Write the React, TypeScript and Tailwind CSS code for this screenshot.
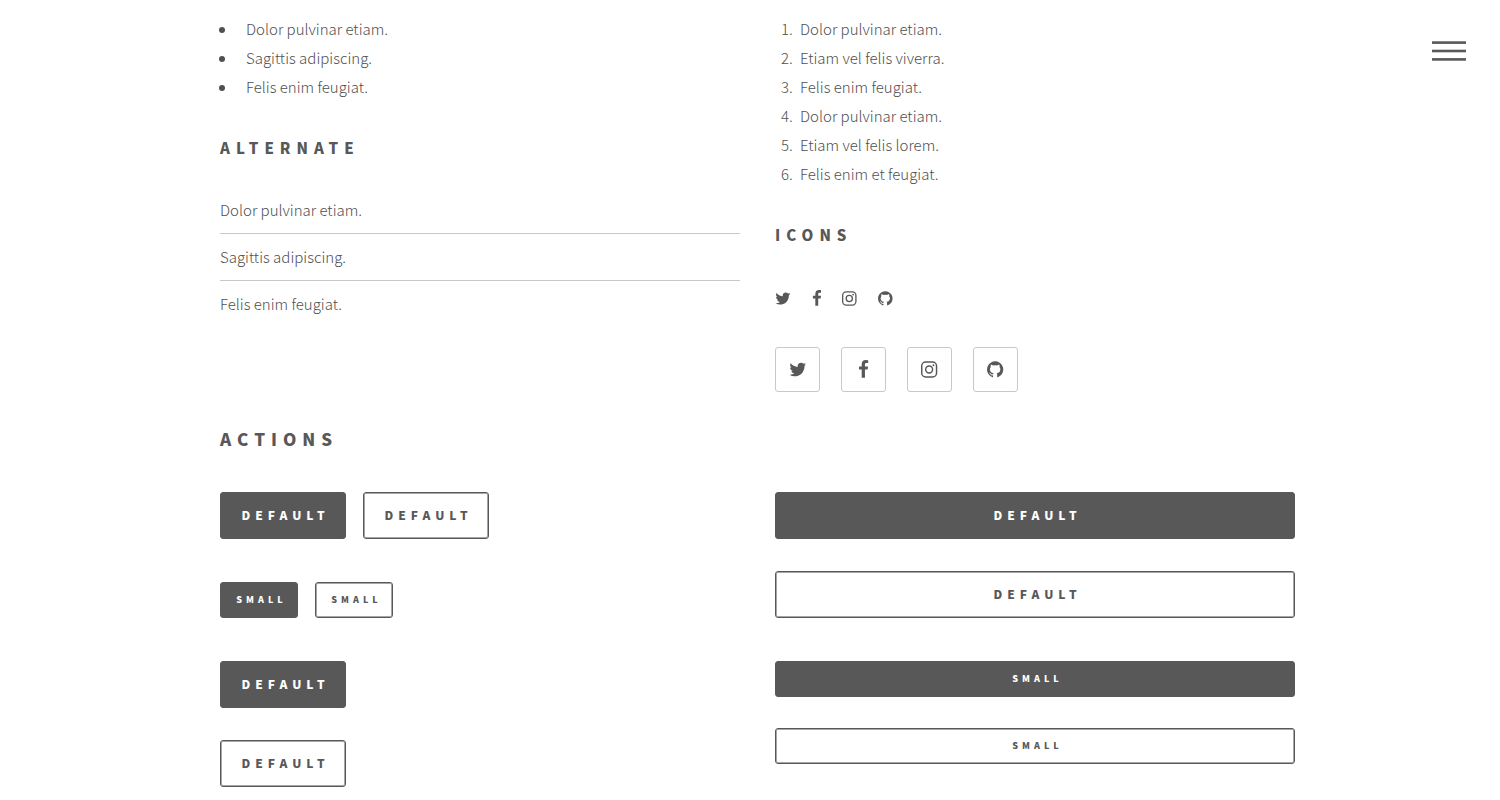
import type { ReactNode } from "react";

const bulleted = ["Dolor pulvinar etiam.", "Sagittis adipiscing.", "Felis enim feugiat."];
const numbered = [
  "Dolor pulvinar etiam.",
  "Etiam vel felis viverra.",
  "Felis enim feugiat.",
  "Dolor pulvinar etiam.",
  "Etiam vel felis lorem.",
  "Felis enim et feugiat.",
];

type Social = { name: string; viewBox: string; shape: ReactNode };

const socials: Social[] = [
  {
    name: "Twitter",
    viewBox: "64 0 1664 1792",
    shape: (
      <path d="M1684 408q-67 98-162 167 1 14 1 42 0 130-38 259.5t-115.5 248.5-184.5 210.5-258 146-323 54.5q-271 0-496-145 35 4 78 4 225 0 401-138-105-2-188-64.5t-114-159.5q33 5 61 5 43 0 85-11-112-23-185.5-111.5t-73.5-205.5v-4q68 38 146 41-66-44-105-115t-39-154q0-88 44-163 121 149 294.5 238.5t371.5 99.5q-8-38-8-74 0-134 94.5-228.5t228.5-94.5q140 0 236 102 109-21 205-78-37 115-142 178 93-10 186-50z" />
    ),
  },
  {
    name: "Facebook",
    viewBox: "384 0 1024 1792",
    shape: (
      <path d="M1343 12v264h-157q-86 0-116 36t-30 108v189h293l-39 296h-254v759h-306v-759h-255v-296h255v-218q0-186 104-288.5t277-102.5q147 0 228 12z" />
    ),
  },
  {
    name: "Instagram",
    viewBox: "128 0 1536 1792",
    shape: (
      <>
        <rect x="197" y="197" width="1398" height="1398" rx="370" fill="none" stroke="currentColor" strokeWidth="138" />
        <circle cx="896" cy="896" r="325" fill="none" stroke="currentColor" strokeWidth="138" />
        <circle cx="1306" cy="486" r="92" />
      </>
    ),
  },
  {
    name: "GitHub",
    viewBox: "128 0 1536 1792",
    shape: (
      <path d="M896 128q209 0 385.5 103t279.5 279.5 103 385.5q0 251-146.5 451.5t-378.5 277.5q-27 5-40-7t-13-30q0-3 .5-76.5t.5-134.5q0-97-52-142 57-6 102.5-18t94-39 81-66.5 53-105 20.5-150.5q0-119-79-206 37-91-8-204-28-9-81 11t-92 44l-38 24q-93-26-192-26t-192 26q-16-11-42.5-27t-83.5-38.5-85-13.5q-45 113-8 204-79 87-79 206 0 85 20.5 150t52.5 105 80.5 67 94 39 102.5 18q-39 36-49 103-21 10-45 15t-57 5-65.5-21.5-55.5-62.5q-19-32-48.5-52t-49.5-24l-20-3q-21 0-29 4.5t-5 11.5 9 14 13 12l7 5q22 10 43.5 38t31.5 51l10 23q13 38 44 61.5t67 30 69.5 7 55.5-3.5l23-4q0 38 .5 88.5t.5 54.5q0 18-13 30t-40 7q-232-77-378.5-277.5t-146.5-451.5q0-209 103-385.5t279.5-279.5 385.5-103z" />
    ),
  },
];

function Glyph({ social, className }: { social: Social; className: string }) {
  return (
    <svg viewBox={social.viewBox} fill="currentColor" aria-hidden="true" className={`w-auto ${className}`}>
      {social.shape}
    </svg>
  );
}

type ActionProps = { label: string; primary?: boolean; small?: boolean; fit?: boolean };

function Action({ label, primary, small, fit }: ActionProps) {
  const size = small
    ? "h-9 text-[9px] tracking-[4px]"
    : "h-[47px] text-[12px] tracking-[5px]";
  const tone = primary
    ? "bg-[#585858] text-white"
    : "bg-white text-[#585858] shadow-[inset_0_0_0_1px_#a6a6a6]";
  const width = fit ? "w-full" : small ? "w-[78px]" : "w-[126px]";
  return (
    <button
      type="button"
      className={`flex cursor-pointer items-center justify-center rounded-[3px] border border-[#585858] pb-[2px] pl-[5px] font-black uppercase ${size} ${tone} ${width}`}
    >
      {label}
    </button>
  );
}

export default function App() {
  return (
    <div className="bg-white pb-3 font-['Noto_Sans_CJK_SC','Source_Sans_Pro',sans-serif] text-[15px] leading-[29px] font-light text-[#505050]">
      <button type="button" aria-label="Menu" className="fixed top-[41px] right-[34px] z-10 cursor-pointer">
        <svg width="34" height="20" viewBox="0 0 34 20" fill="#585858" aria-hidden="true">
          <rect width="34" height="2.6" y="0.3" />
          <rect width="34" height="2.6" y="8.7" />
          <rect width="34" height="2.6" y="17.1" />
        </svg>
      </button>

      <main className="mx-auto max-w-[1090px] pl-[15px]">
        <section className="grid grid-cols-2 gap-x-[35px] pt-[14px]">
          <div>
            <ul className="list-disc pl-[17px]">
              {bulleted.map((item) => (
                <li key={item} className="pl-[9px]">{item}</li>
              ))}
            </ul>
            <h3 className="mt-8 text-[15px] font-black tracking-[6px] text-[#585858] uppercase">Alternate</h3>
            <ul className="mt-[25px] divide-y divide-[#c8c8c8]">
              {bulleted.map((item) => (
                <li key={item} className="pt-2 pb-[9px]">{item}</li>
              ))}
            </ul>
          </div>
          <div>
            <ol className="list-decimal pl-[21px]">
              {numbered.map((item, i) => (
                <li key={i} className="pl-1">{item}</li>
              ))}
            </ol>
            <h3 className="mt-8 text-[15px] font-black tracking-[6px] text-[#585858] uppercase">Icons</h3>
            <ul className="mt-[35px] flex items-center gap-[21px] text-[#585858]">
              {socials.map((social) => (
                <li key={social.name}>
                  <a href="#" aria-label={social.name} className="flex h-7 items-center">
                    <Glyph social={social} className="h-[17px]" />
                  </a>
                </li>
              ))}
            </ul>
            <ul className="mt-[35px] flex gap-[21px] text-[#585858]">
              {socials.map((social) => (
                <li key={social.name}>
                  <a
                    href="#"
                    aria-label={social.name}
                    className="flex size-[45px] items-center justify-center rounded-[3px] border border-[#c8c8c8]"
                  >
                    <Glyph social={social} className="h-[19px]" />
                  </a>
                </li>
              ))}
            </ul>
          </div>
        </section>

        <section className="mt-8">
          <h2 className="text-[17px] font-black tracking-[6px] text-[#585858] uppercase">Actions</h2>
          <div className="mt-[39px] grid grid-cols-2 gap-x-[35px]">
            <div className="flex flex-col">
              <div className="flex gap-[17px]">
                <Action label="Default" primary />
                <Action label="Default" />
              </div>
              <div className="mt-[43px] flex gap-[17px]">
                <Action label="Small" primary small />
                <Action label="Small" small />
              </div>
              <div className="mt-[43px] flex flex-col items-start gap-8">
                <Action label="Default" primary />
                <Action label="Default" />
              </div>
            </div>
            <div className="flex flex-col">
              <div className="flex flex-col gap-8">
                <Action label="Default" primary fit />
                <Action label="Default" fit />
              </div>
              <div className="mt-[43px] flex flex-col gap-[31px]">
                <Action label="Small" primary small fit />
                <Action label="Small" small fit />
              </div>
            </div>
          </div>
        </section>
      </main>
    </div>
  );
}
